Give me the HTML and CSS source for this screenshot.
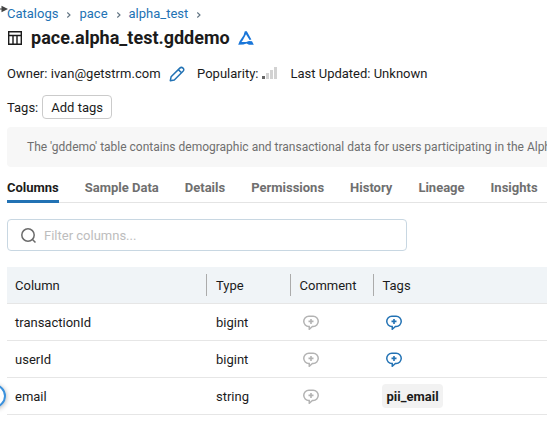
FILE: index.html
```html
<!DOCTYPE html>
<html lang="en">
<head>
<meta charset="utf-8">
<title>pace.alpha_test.gddemo</title>
<link rel="stylesheet" href="styles.css">
</head>
<body>
<svg class="symbols" aria-hidden="true">
  <symbol id="chevron" viewBox="0 0 6 8"><path d="M1.3 1.5 4 4 1.3 6.5" fill="none" stroke="currentColor" stroke-width="1.1"/></symbol>
  <symbol id="comment" viewBox="0 0 16 16"><path d="M6.2 12.4H5.8A5.05 5.05 0 0 1 5.8 2.3H10.2A5.05 5.05 0 0 1 10.2 12.4H9.4L6.3 15.2Z" fill="none" stroke="currentColor" stroke-width="1.5"/><path d="M8 4.9V9.9M5.5 7.4H10.5" stroke="currentColor" stroke-width="1.6"/></symbol>
</svg>
<svg class="panel-arrow" viewBox="0 0 8 8"><path d="M0 4H3" stroke="#444"/><path d="M1.5 .8 8 4 1.5 7.2Z" fill="#444"/></svg>
<span class="panel-handle"></span>
<main class="page">
  <nav class="crumbs">
    <a>Catalogs</a><svg><use href="#chevron"/></svg>
    <a>pace</a><svg><use href="#chevron"/></svg>
    <a>alpha_test</a><svg><use href="#chevron"/></svg>
  </nav>
  <header class="title">
    <svg class="table-icon" viewBox="0 0 14 14"><path d="M.7.7H13.3V13.3H.7ZM.7 4.5H13.3M5 4.5V13.3M9 4.5V13.3" fill="none" stroke="#1b1b1b" stroke-width="1.4"/></svg>
    <h1>pace.alpha_test.gddemo</h1>
    <svg class="delta" viewBox="0 0 16 14"><path d="M6.8 .2H8.8L13.4 8.6 11.6 8.9 8 3.2 4.8 9.2 3.4 10.9H8.2L11 10.1 14 10.3 15.8 13.8H11L8.6 12.4 5.4 13.6 .2 13.8 1.6 10.2 5.6 4.2Z" fill="#1976d9"/></svg>
  </header>
  <div class="meta">
    <span class="owner">Owner: ivan@getstrm.com</span>
    <svg class="pencil" viewBox="0 0 16 16"><path d="M1.3 14.7 2.1 10.8 10.8 2.1Q12.4.6 14 2.1T14 5.3L5.3 14Z M9.3 3.6 12.5 6.8" fill="none" stroke="#2272b4" stroke-width="1.5" stroke-linejoin="round"/></svg>
    <span class="popularity">Popularity:</span>
    <svg class="bars" viewBox="0 0 15 12"><path d="M0 9H3V12H0Z" fill="#666"/><path d="M4 6H7V12H4ZM8 3H11V12H8ZM12 0H15V12H12Z" fill="#d2d2d2"/></svg>
    <span class="updated">Last Updated: Unknown</span>
  </div>
  <div class="tags"><span>Tags:</span><button>Add tags</button></div>
  <p class="description">The 'gddemo' table contains demographic and transactional data for users participating in the Alpha test</p>
  <nav class="tabs"><a class="active">Columns</a><a>Sample Data</a><a>Details</a><a>Permissions</a><a>History</a><a>Lineage</a><a>Insights</a></nav>
  <label class="filter"><svg viewBox="0 0 16 16"><circle cx="7" cy="7" r="6.2"/><path d="m11.5 11.5 3 3"/></svg><input placeholder="Filter columns..."></label>
  <section class="grid">
    <div class="row head"><span>Column</span><span>Type</span><span>Comment</span><span>Tags</span></div>
    <div class="row"><span>transactionId</span><span>bigint</span><svg class="note"><use href="#comment"/></svg><svg class="note add"><use href="#comment"/></svg></div>
    <div class="row"><span>userId</span><span>bigint</span><svg class="note"><use href="#comment"/></svg><svg class="note add"><use href="#comment"/></svg></div>
    <div class="row"><span>email</span><span>string</span><svg class="note"><use href="#comment"/></svg><b class="tag">pii_email</b></div>
  </section>
</main>
</body>
</html>
```
FILE: styles.css
```css
* { box-sizing: border-box; }
body { margin: 0; overflow: hidden; background: #fff; color: #1b1b1b; font: 13px/20px Roboto, sans-serif; }
svg { display: block; flex: none; }
.symbols { position: absolute; width: 0; height: 0; }
.panel-arrow { position: absolute; left: 0; top: 5px; width: 8px; height: 8px; }
.panel-handle { position: absolute; left: -18px; top: 384px; width: 24px; height: 24px; border: 2px solid #3b91dc; border-radius: 50%; box-shadow: 0 1px 5px #0005; }
.page { padding: 4px 0 0 7px; }
.crumbs { display: flex; align-items: center; height: 20px; color: #2272b4; }
.crumbs svg { width: 6px; height: 8px; margin: 1px 7px 0 8px; color: #5f7281; }
.title { display: flex; align-items: center; height: 28px; }
.table-icon { width: 14px; height: 14px; margin-left: 1px; }
h1 { margin: 0 0 0 9px; font-size: 18px; line-height: 28px; font-weight: 700; white-space: nowrap; }
.delta { width: 16px; height: 14px; margin-left: 8px; }
.meta { display: flex; align-items: center; height: 20px; margin-top: 12px; white-space: nowrap; }
.owner { letter-spacing: .02px; }
.pencil { width: 16px; height: 16px; margin: 0 0 1px 8.5px; }
.popularity { margin-left: 12px; }
.bars { width: 15px; height: 12px; margin: 0 0 3px 4px; }
.updated { margin-left: 13px; }
.tags { display: flex; align-items: center; height: 24px; margin-top: 11px; }
.tags > span { padding-top: 2px; }
.tags button { height: 24px; margin: 0 0 0 4px; padding: 1px 8px 0; border: 1px solid #cbcbcb; border-radius: 4px; background: #fff; color: inherit; font: inherit; }
.description { height: 40px; margin: 8px 0 0; padding: 10px 20px; border-radius: 4px 0 0 4px; background: #f7f7f7; color: #6f6f6f; font-size: 12px; white-space: nowrap; overflow: hidden; }
.tabs { display: flex; gap: 26px; height: 36px; box-shadow: inset 0 -1px #e4e4e4; color: #6f6f6f; font-weight: 700; white-space: nowrap; }
.tabs a { height: 36px; padding-top: 11px; }
.tabs .active { color: #1b1b1b; border-bottom: 3px solid #2272b4; }
.filter { display: flex; align-items: center; width: 400px; height: 32px; margin-top: 16px; padding: 0 12px 0 13px; border: 1px solid #c8d7e2; border-radius: 4px; }
.filter svg { width: 16px; height: 16px; margin-top: 1px; fill: none; stroke: #6b6b6b; stroke-width: 1.5; }
.filter input { flex: 1; min-width: 0; margin-left: 7px; padding: 2px 0 0; border: 0; outline: 0; background: none; font: inherit; }
.filter input::placeholder { color: #bdbdbd; opacity: 1; }
.grid { margin-top: 16px; }
.row { display: grid; grid-template-columns: 199px 84px 83px 1fr; align-items: center; height: 37px; border-bottom: 1px solid #e6e6e6; }
.row > span { padding: 2px 0 0 8px; }
.row > span + span { padding-left: 10px; }
.head { background: #f0f4f7; }
.head > span + span { border-left: 1px solid #ababab; padding-left: 9px; }
.head > span:nth-child(n + 3) { padding-left: 8.5px; }
.note { width: 16px; height: 16px; margin-left: 13px; color: #b3b3b3; }
.add { color: #2272b4; }
.tag { justify-self: start; height: 24px; margin-left: 9px; padding: 3px 4.5px 0; border-radius: 4px; background: #f2f2f2; }
```
